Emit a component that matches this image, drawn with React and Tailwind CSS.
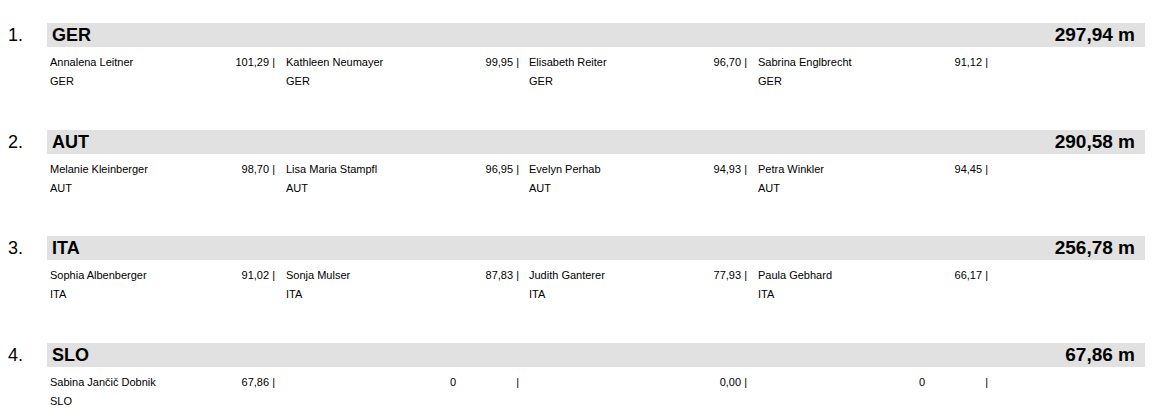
const teams = [
  {
    rank: "1.",
    code: "GER",
    total: "297,94 m",
    gap: "h-[107px]",
    players: [
      { name: "Annalena Leitner", nat: "GER", score: "101,29" },
      { name: "Kathleen Neumayer", nat: "GER", score: "99,95" },
      { name: "Elisabeth Reiter", nat: "GER", score: "96,70" },
      { name: "Sabrina Englbrecht", nat: "GER", score: "91,12" },
    ],
  },
  {
    rank: "2.",
    code: "AUT",
    total: "290,58 m",
    gap: "h-[106px]",
    players: [
      { name: "Melanie Kleinberger", nat: "AUT", score: "98,70" },
      { name: "Lisa Maria Stampfl", nat: "AUT", score: "96,95" },
      { name: "Evelyn Perhab", nat: "AUT", score: "94,93" },
      { name: "Petra Winkler", nat: "AUT", score: "94,45" },
    ],
  },
  {
    rank: "3.",
    code: "ITA",
    total: "256,78 m",
    gap: "h-[107px]",
    players: [
      { name: "Sophia Albenberger", nat: "ITA", score: "91,02" },
      { name: "Sonja Mulser", nat: "ITA", score: "87,83" },
      { name: "Judith Ganterer", nat: "ITA", score: "77,93" },
      { name: "Paula Gebhard", nat: "ITA", score: "66,17" },
    ],
  },
  {
    rank: "4.",
    code: "SLO",
    total: "67,86 m",
    gap: "h-[75px]",
    players: [
      { name: "Sabina Jančič Dobnik", nat: "SLO", score: "67,86" },
      { name: "", nat: "", score: "0" },
      { name: "", nat: "", score: "0,00" },
      { name: "", nat: "", score: "0" },
    ],
  },
];

// column widths + spacing to the next column
const cols = [
  "w-[225px] mr-[11px]",
  "w-[233px] mr-[10px]",
  "w-[218px] mr-[11px]",
  "w-[230px]",
];

function PlayerCell({ player, col }) {
  return (
    <div className={`${cols[col]} flex justify-between`}>
      <div className="flex flex-col">
        <span className="whitespace-nowrap">{player.name || "\u00a0"}</span>
        <span>{player.nat || "\u00a0"}</span>
      </div>
      {player.score === "0" ? (
        <div className="flex">
          <span>0</span>
          <span className="inline-block w-[63px] text-right">|</span>
        </div>
      ) : (
        <span className="whitespace-pre">{player.score} |</span>
      )}
    </div>
  );
}

function TeamBlock({ team }) {
  return (
    <div className={team.gap}>
      <div className="flex items-center h-[24px]">
        <div className="w-[47px] pl-[8px] text-[18px] leading-[24px]">{team.rank}</div>
        <div className="w-[1098px] h-[24px] bg-[#e1e1e1] flex justify-between items-center pl-[5px] pr-[10px]">
          <span className="text-[18px] font-bold leading-[24px]">{team.code}</span>
          <span className="text-[19px] font-bold leading-[24px]">{team.total}</span>
        </div>
      </div>
      <div className="flex pl-[50px] pt-[6px] text-[11px] leading-[19px]">
        {team.players.map((p, i) => (
          <PlayerCell key={i} player={p} col={i} />
        ))}
      </div>
    </div>
  );
}

export default function App() {
  return (
    <div className="w-[1169px] h-[418px] bg-white text-black pt-[23px] overflow-hidden font-['Liberation_Sans',Arial,sans-serif]">
      {teams.map((t) => (
        <TeamBlock key={t.code} team={t} />
      ))}
    </div>
  );
}
